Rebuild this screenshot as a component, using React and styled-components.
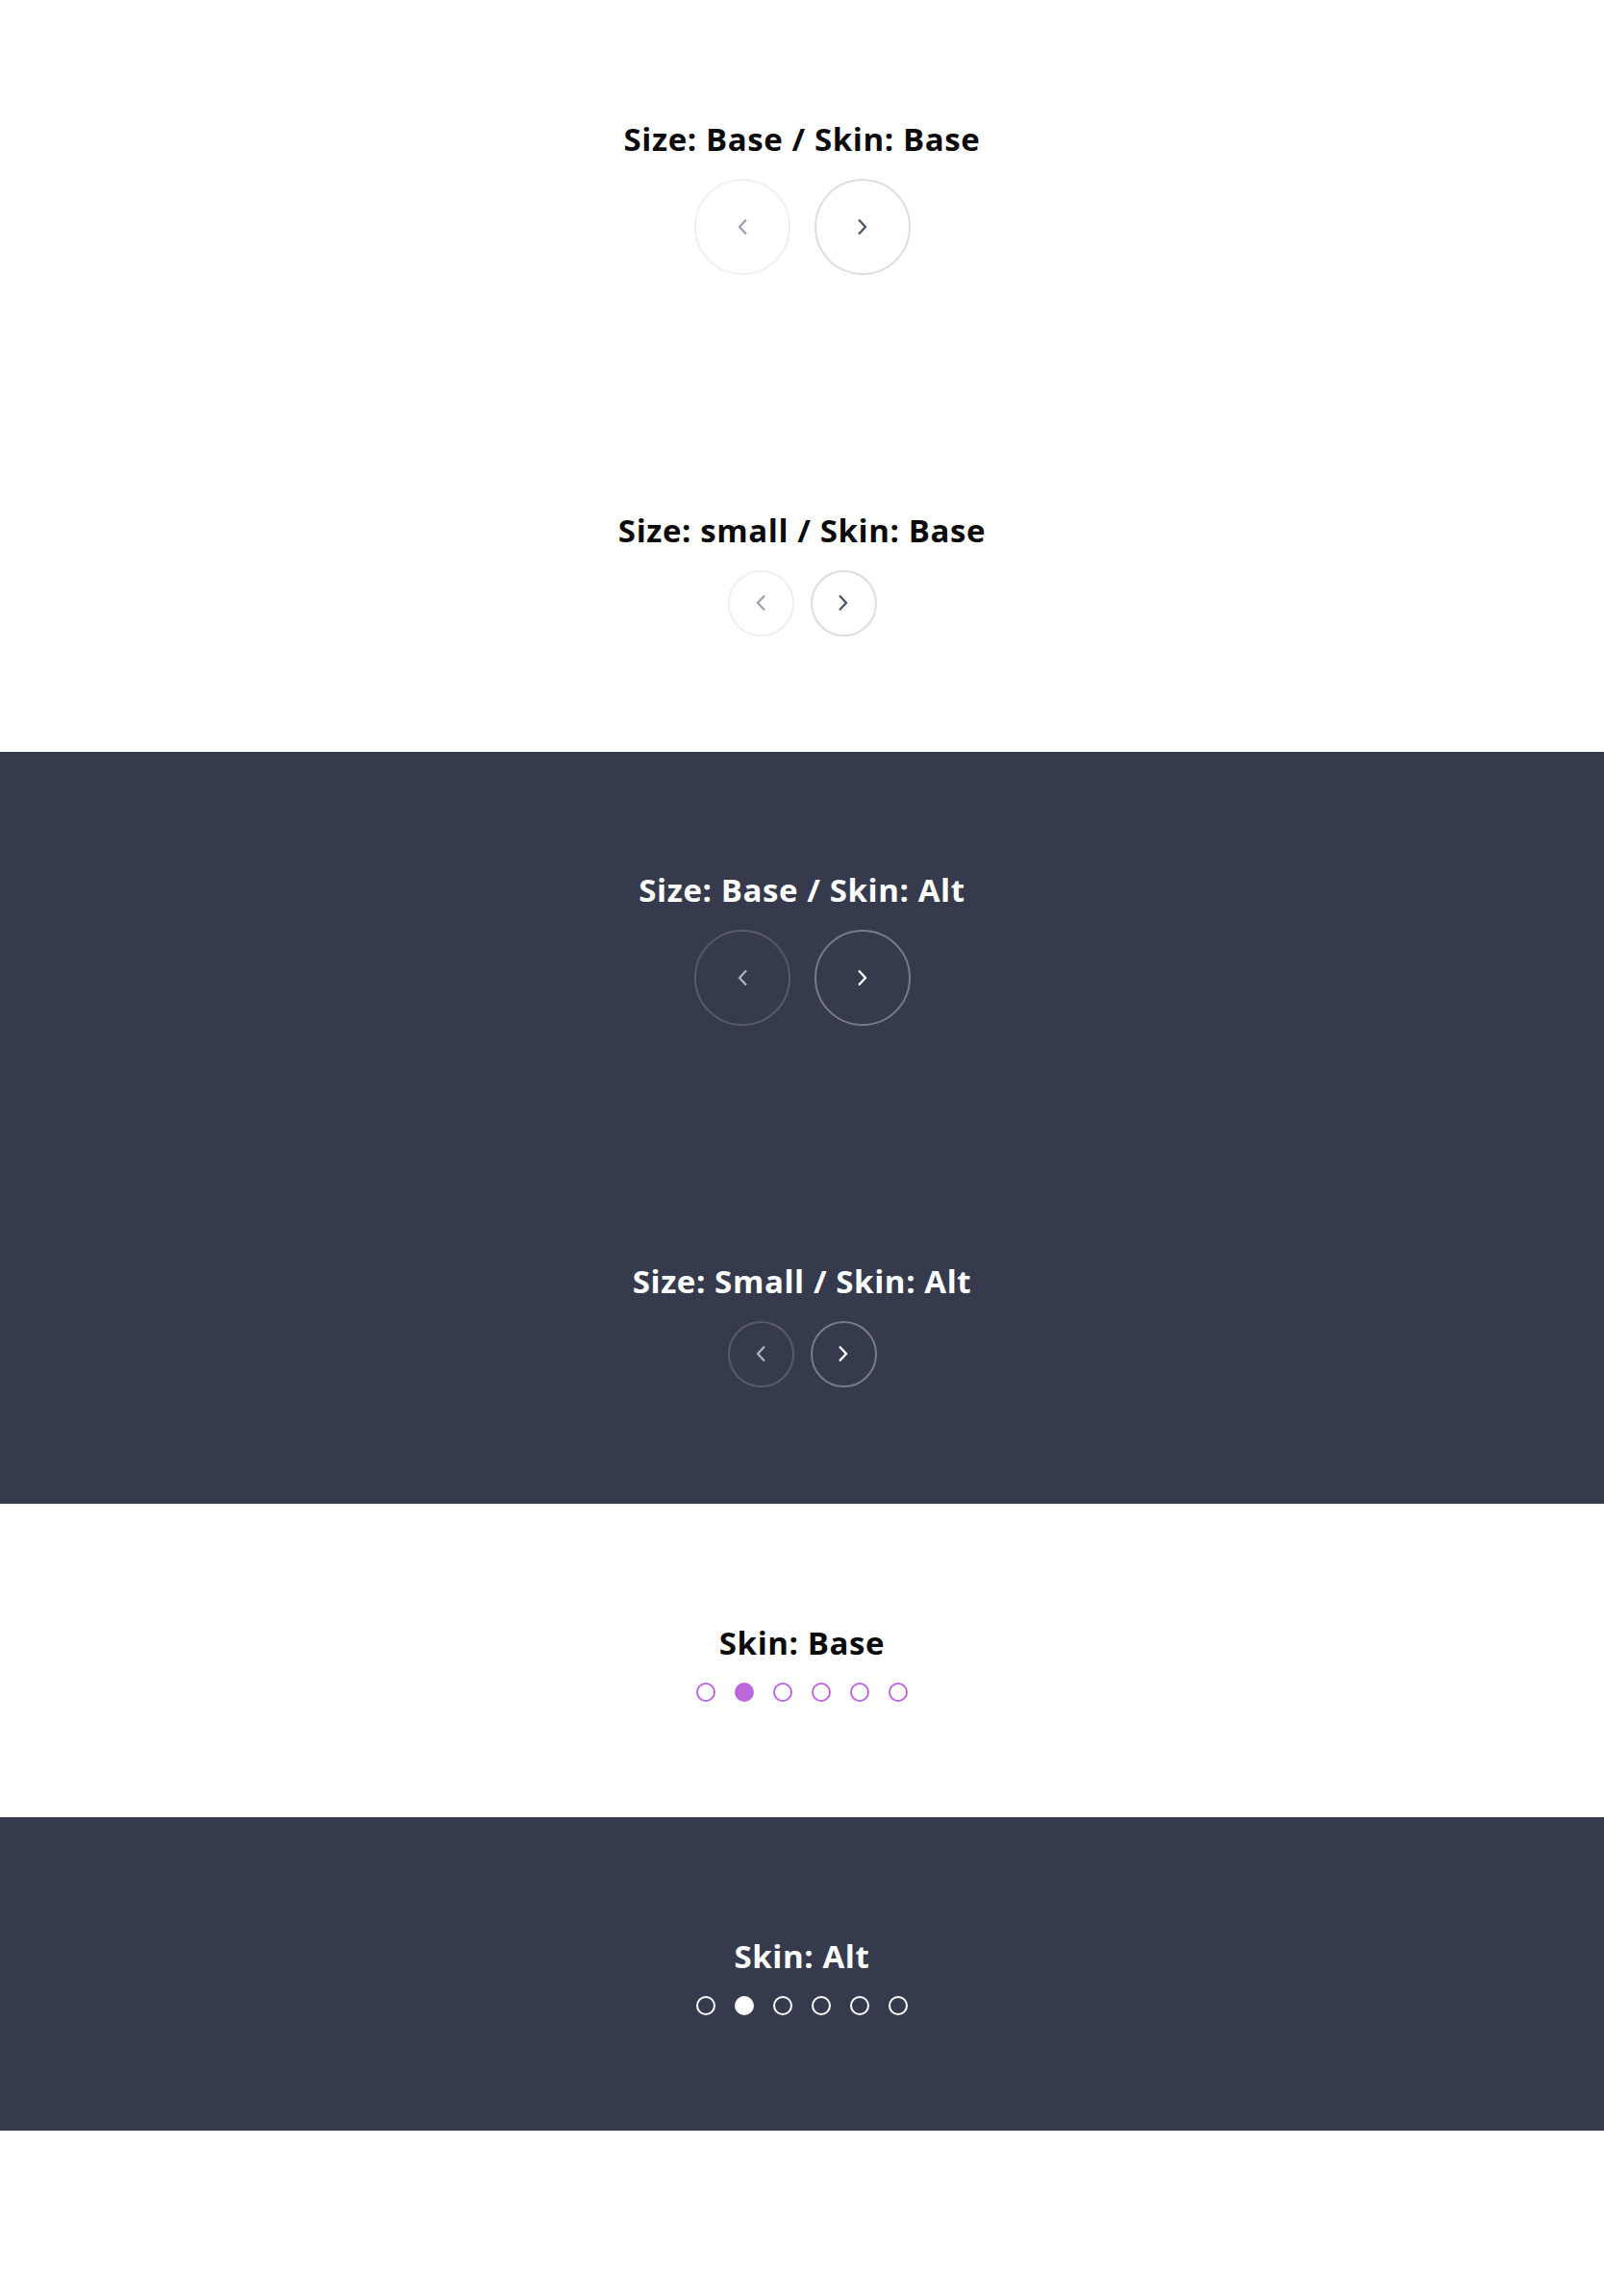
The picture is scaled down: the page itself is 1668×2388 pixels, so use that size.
import React from 'react'
import styled, { createGlobalStyle } from 'styled-components'

const GlobalStyle = createGlobalStyle`
    * { box-sizing: border-box; }
    body {
        margin: 0;
        background: #ffffff;
        font-family: "Open Sans", Lato, sans-serif;
    }
`

const Page = styled.div`
    display: flex;
    flex-direction: column;
    padding-bottom: 172px;
`
const Band = styled.div`
    display: flex;
    flex-direction: column;
    background: ${p => (p.$dark ? '#363a4d' : '#ffffff')};
`
const Section = styled.section`
    height: ${p => p.$height}px;
    padding-top: ${p => p.$shift}px;
    display: flex;
    flex-direction: column;
    align-items: center;
    justify-content: center;
`
const Title = styled.h2`
    margin: 0 0 22px;
    font-size: 33px;
    line-height: 38px;
    font-weight: 700;
    letter-spacing: 0.6px;
    color: ${p => (p.$dark ? '#ffffff' : '#0b0b0b')};
`
const ButtonRow = styled.div`
    display: flex;
    gap: ${p => (p.$small ? 17 : 25)}px;
`
const NavButton = styled.button`
    width: ${p => (p.$small ? 69 : 100)}px;
    height: ${p => (p.$small ? 69 : 100)}px;
    border-radius: 50%;
    padding: 0;
    background: transparent;
    display: flex;
    align-items: center;
    justify-content: center;
    cursor: pointer;
    border: 2px solid
        ${p =>
            p.$dark
                ? p.$enabled
                    ? 'rgba(255,255,255,0.33)'
                    : 'rgba(255,255,255,0.17)'
                : p.$enabled
                ? '#dcdde0'
                : '#efeff1'};
    color: ${p =>
        p.$dark
            ? p.$enabled
                ? '#ffffff'
                : 'rgba(255,255,255,0.6)'
            : p.$enabled
            ? '#4b5468'
            : '#9ba1ad'};
`
const DotRow = styled.div`
    display: flex;
    gap: 20px;
`
const Dot = styled.span`
    width: 20px;
    height: 20px;
    border-radius: 50%;
    border: 2px solid ${p => (p.$dark ? '#ffffff' : '#bb68dc')};
    background: ${p =>
        p.$active ? (p.$dark ? '#ffffff' : '#bb68dc') : 'transparent'};
`

const Chevron = ({ dir }) => (
    <svg width="12" height="18" viewBox="0 0 12 18" fill="none">
        <path
            d={dir === 'left' ? 'M10 1.5 L3 9 L10 16.5' : 'M2 1.5 L9 9 L2 16.5'}
            stroke="currentColor"
            strokeWidth="2.3"
        />
    </svg>
)

const Arrows = ({ small, dark }) => (
    <ButtonRow $small={small}>
        <NavButton $small={small} $dark={dark}>
            <Chevron dir="left" />
        </NavButton>
        <NavButton $small={small} $dark={dark} $enabled>
            <Chevron dir="right" />
        </NavButton>
    </ButtonRow>
)

const Dots = ({ dark }) => (
    <DotRow>
        {[0, 1, 2, 3, 4, 5].map(i => (
            <Dot key={i} $dark={dark} $active={i === 1} />
        ))}
    </DotRow>
)

const App = () => {
    return (
        <Page>
            <GlobalStyle />
            <Band>
                <Section $height={391} $shift={21}>
                    <Title>Size: Base / Skin: Base</Title>
                    <Arrows />
                </Section>
                <Section $height={391} $shift={21}>
                    <Title>Size: small / Skin: Base</Title>
                    <Arrows small />
                </Section>
            </Band>
            <Band $dark>
                <Section $height={391} $shift={19}>
                    <Title $dark>Size: Base / Skin: Alt</Title>
                    <Arrows dark />
                </Section>
                <Section $height={391} $shift={19}>
                    <Title $dark>Size: Small / Skin: Alt</Title>
                    <Arrows small dark />
                </Section>
            </Band>
            <Band>
                <Section $height={326} $shift={5}>
                    <Title>Skin: Base</Title>
                    <Dots />
                </Section>
            </Band>
            <Band $dark>
                <Section $height={326} $shift={5}>
                    <Title $dark>Skin: Alt</Title>
                    <Dots dark />
                </Section>
            </Band>
        </Page>
    )
}

export default App
